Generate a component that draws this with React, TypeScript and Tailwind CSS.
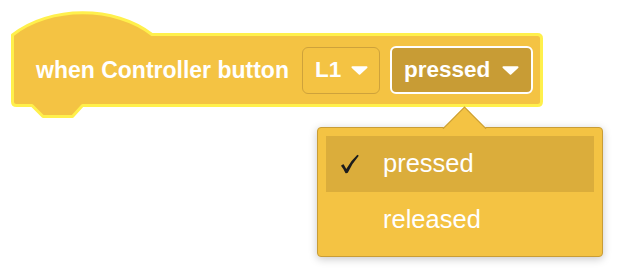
import React from "react";

function Caret() {
  return (
    <svg width="17" height="9" viewBox="0 0 17 9" className="shrink-0">
      <path d="M1.5 1.2 L15.5 1.2 L8.5 7.8 Z" fill="#ffffff" stroke="#ffffff" strokeWidth="2" strokeLinejoin="round" />
    </svg>
  );
}

function Check() {
  return (
    <svg width="20" height="20" viewBox="0 0 20 20" className="shrink-0">
      <path
        d="M1 11.8 Q2.2 10.4 3.6 10.3 L6.3 15 Q10.5 7 17.4 0.8 L18.8 1.8 Q12 9.5 7.8 18.8 Q6.6 19.6 5.4 19.1 Q3.6 14.8 1 11.8 Z"
        fill="#1c1c1c"
      />
    </svg>
  );
}

export default function App() {
  return (
    <div className="w-[618px] h-[278px] bg-white pt-[10px] pl-[10px] overflow-hidden font-['Liberation_Sans',Arial,sans-serif]">
      <div className="relative w-[536px] h-[110px] pt-[23px]">
        <svg className="absolute left-0 top-0" width="536" height="110" viewBox="0 0 536 110">
          <path
            d="M 2.5 91.5 L 2.5 25 C 40 -4.5 105 -4.5 142 24.5 L 527.5 24.5 Q 531.5 24.5 531.5 28.5 L 531.5 91.5 Q 531.5 95.5 527.5 95.5 L 72.5 95.5 L 62.5 106.5 L 33 106.5 L 22 95.5 L 6.5 95.5 Q 2.5 95.5 2.5 91.5 Z"
            fill="#f4c343"
            stroke="#fff04c"
            strokeWidth="3"
            strokeLinejoin="round"
          />
        </svg>
        <div className="relative flex items-center h-[74px] pl-[26px]">
          <span className="text-white font-bold text-[23px] leading-none whitespace-nowrap">when Controller button</span>
          <div className="ml-[13px] flex items-center w-[78px] h-[47px] rounded-[6px] border border-[#cea23b] pl-[12px] pr-[11px] justify-between">
            <span className="text-white font-bold text-[22.5px] leading-none">L1</span>
            <Caret />
          </div>
          <div className="ml-[10px] flex items-center w-[143px] h-[48px] rounded-[6px] border-2 border-white bg-[#c89c35] pl-[12px] pr-[12px] justify-between">
            <span className="text-white font-bold text-[22.5px] leading-none">pressed</span>
            <Caret />
          </div>
        </div>

        <div className="absolute left-[307px] top-[117px] w-[286px] h-[130px] bg-[#f4c343] border border-[#c99d36] rounded-[4px] shadow-[0_2px_8px_rgba(0,0,0,0.22)] p-[8px]">
          <div className="absolute left-[123px] top-[-22px] w-[46px] h-[23px] overflow-hidden">
            <div className="absolute left-[7.5px] top-[7px] w-[31px] h-[31px] rotate-45 bg-[#f4c343] border-t border-l border-[#c99d36]" />
          </div>
          <div className="relative flex items-center h-[56px] bg-[#dbad3b] pl-[14px]">
            <span className="w-[43px] flex items-center">
              <Check />
            </span>
            <span className="text-white text-[25.5px] leading-none">pressed</span>
          </div>
          <div className="relative flex items-center h-[56px] pl-[57px]">
            <span className="text-white text-[25.5px] leading-none">released</span>
          </div>
        </div>
      </div>
    </div>
  );
}
